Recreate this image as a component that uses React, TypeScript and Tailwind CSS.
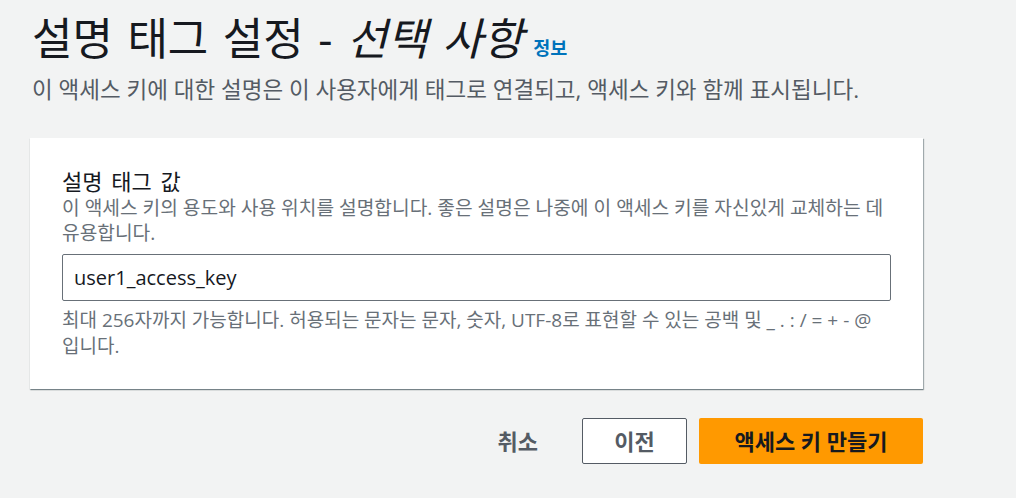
import React, { useState } from 'react';

const font = "font-['Open_Sans','Noto_Sans_CJK_KR',sans-serif]";

const App: React.FC = () => {
  const [desc, setDesc] = useState('user1_access_key');

  return (
    <div className={`min-h-screen w-[1016px] h-[498px] overflow-hidden bg-[#f2f3f3] ${font}`}>
      <div className="w-[893px] ml-[30px] pt-[11px]">
        {/* Header */}
        <div className="flex items-baseline">
          <h1 className="text-[44px] leading-[54px] font-normal text-[#16191f] pl-[2px] [word-spacing:3px]">
            설명 태그 설정 - <i className="italic">선택 사항</i>
          </h1>
          <a href="#" className="ml-[10px] text-[18.5px] font-bold text-[#0073bb]">
            정보
          </a>
        </div>
        <p className="mt-[11px] text-[22.5px] leading-[28px] text-[#545b64] pl-[2px]">
          이 액세스 키에 대한 설명은 이 사용자에게 태그로 연결되고, 액세스 키와 함께 표시됩니다.
        </p>

        {/* Card */}
        <div className="mt-[34px] bg-white px-[32px] pt-[29px] pb-[30px] shadow-[1px_1px_1px_0_rgba(0,28,36,0.3),0_1px_1px_0_rgba(0,28,36,0.3)]">
          <label className="block text-[22px] leading-[28px] text-[#16191f] [word-spacing:3px]">설명 태그 값</label>
          <p className="text-[19.2px] leading-[25px] text-[#687078]">
            이 액세스 키의 용도와 사용 위치를 설명합니다. 좋은 설명은 나중에 이 액세스 키를 자신있게 교체하는 데
            유용합니다.
          </p>
          <input
            value={desc}
            onChange={e => setDesc(e.target.value)}
            className="mt-[9px] w-full h-[47px] border border-[#687078] rounded-[2px] px-[11px] text-[20px] text-[#16191f] outline-none"
          />
          <p className="mt-[6px] text-[19px] leading-[26px] text-[#687078]">
            최대 256자까지 가능합니다. 허용되는 문자는 문자, 숫자, UTF-8로 표현할 수 있는 공백 및 _ . : / = + - @
            입니다.
          </p>
        </div>

        {/* Actions */}
        <div className="mt-[29px] flex justify-end items-center gap-[12px]">
          <button className="h-[46px] pl-[20px] pr-[32px] text-[22px] font-bold text-[#545b64]">취소</button>
          <button className="h-[46px] w-[105px] bg-white border border-[#545b64] rounded-[2px] text-[22px] font-bold text-[#545b64]">
            이전
          </button>
          <button className="h-[46px] w-[224px] bg-[#ff9900] rounded-[2px] text-[22px] font-bold text-[#16191f]">
            액세스 키 만들기
          </button>
        </div>
      </div>
    </div>
  );
};

export default App;
